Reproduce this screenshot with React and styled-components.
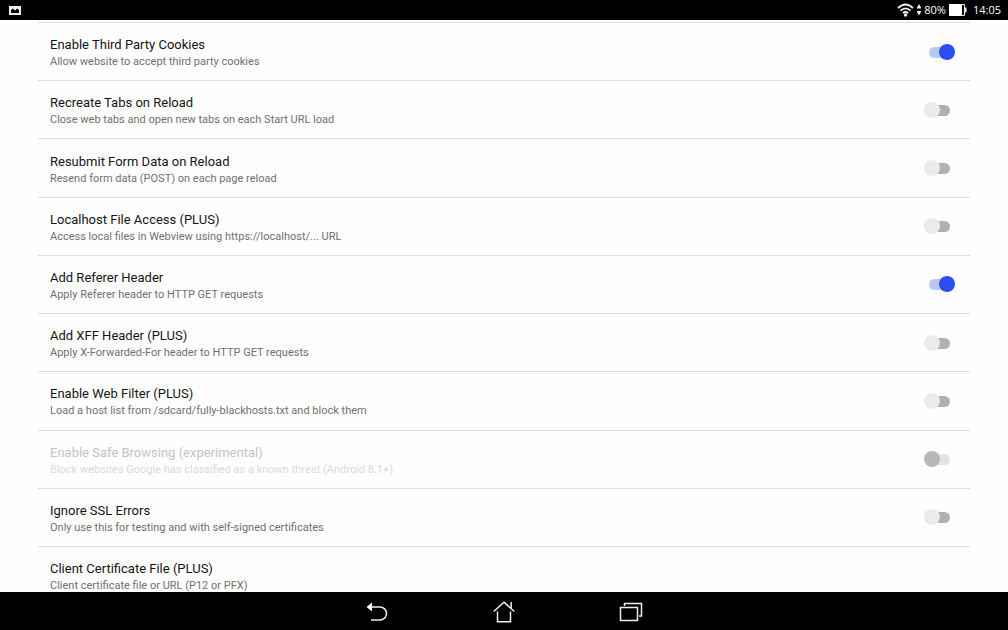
import React, { useState } from 'react';
import styled, { createGlobalStyle } from 'styled-components';

const GlobalStyle = createGlobalStyle`
  * {
    box-sizing: border-box;
  }

  body {
    margin: 0;
    background: #fefefe;
    font-family: Roboto, "Noto Sans", sans-serif;
  }
`;

const Screen = styled.div`
  display: flex;
  flex-direction: column;
  height: 100vh;
`;

const StatusBar = styled.header`
  display: flex;
  flex: none;
  align-items: center;
  justify-content: space-between;
  height: 20px;
  padding: 0 7px 0 8px;
  background: #000;
  color: #fff;
  font-family: "Open Sans", sans-serif;
  font-size: 11px;
  line-height: 20px;
`;

const StatusGroup = styled.div`
  display: flex;
  align-items: center;
  gap: 3px;
`;

const Clock = styled.time`
  margin-left: 3px;
`;

const List = styled.main`
  display: flex;
  flex: 1;
  flex-direction: column;
  min-height: 0;
  margin: 0 38px;
  padding-top: 2px;
  overflow: hidden;
`;

const Row = styled.label`
  display: flex;
  flex: 1 0 auto;
  align-items: center;
  justify-content: space-between;
  padding: 0 15px 0 12px;
  border-top: 1px solid #dcdcdc;
  color: ${props => props.$disabled ? '#c4c4c4' : '#141414'};
`;

const RowText = styled.span`
  padding-top: 3px;
`;

const LinkRow = styled.button`
  flex: none;
  height: 46px;
  padding: 13px 12px 0;
  border: 0;
  border-top: 1px solid #dcdcdc;
  background: none;
  color: #141414;
  font-family: inherit;
  text-align: left;
`;

const Title = styled.span`
  display: block;
  font-size: 13px;
  line-height: 17px;
`;

const Summary = styled.span`
  display: block;
  color: ${props => props.$disabled ? '#dadada' : '#707070'};
  font-size: 11px;
  line-height: 17px;
`;

const Switch = styled.input.attrs({ type: 'checkbox', role: 'switch' })`
  position: relative;
  appearance: none;
  width: 31px;
  height: 16px;
  margin: 0;

  &::before {
    content: '';
    position: absolute;
    top: 3px;
    left: 5px;
    width: 21px;
    height: 11px;
    border-radius: 6px;
    background: #b0b0b0;
  }

  &::after {
    content: '';
    position: absolute;
    top: 0;
    left: 0;
    width: 16px;
    height: 16px;
    border-radius: 50%;
    background: #ebebeb;
  }

  &:checked::before {
    background: #b9c6f8;
  }

  &:checked::after {
    left: 15px;
    background: #2b4df0;
  }

  &:disabled::before {
    background: #e4e4e4;
  }

  &:disabled::after {
    background: #b8b8b8;
  }
`;

const NavBar = styled.nav`
  display: flex;
  flex: none;
  align-items: center;
  justify-content: center;
  gap: 87px;
  height: 38px;
  background: #000;
`;

const NavButton = styled.button`
  display: flex;
  align-items: center;
  justify-content: center;
  width: 40px;
  height: 38px;
  padding: 1px 0 0;
  border: 0;
  background: none;
`;

const settings = [
  { id: 'cookies', title: 'Enable Third Party Cookies', summary: 'Allow website to accept third party cookies', on: true },
  { id: 'tabs', title: 'Recreate Tabs on Reload', summary: 'Close web tabs and open new tabs on each Start URL load' },
  { id: 'form', title: 'Resubmit Form Data on Reload', summary: 'Resend form data (POST) on each page reload' },
  { id: 'localhost', title: 'Localhost File Access (PLUS)', summary: 'Access local files in Webview using https://localhost/... URL' },
  { id: 'referer', title: 'Add Referer Header', summary: 'Apply Referer header to HTTP GET requests', on: true },
  { id: 'xff', title: 'Add XFF Header (PLUS)', summary: 'Apply X-Forwarded-For header to HTTP GET requests' },
  { id: 'filter', title: 'Enable Web Filter (PLUS)', summary: 'Load a host list from /sdcard/fully-blackhosts.txt and block them' },
  { id: 'safe', title: 'Enable Safe Browsing (experimental)', summary: 'Block websites Google has classified as a known threat (Android 8.1+)', disabled: true },
  { id: 'ssl', title: 'Ignore SSL Errors', summary: 'Only use this for testing and with self-signed certificates' },
];

const PictureIcon = () =>
<svg width="14" height="10" viewBox="0 0 14 10">
  <rect x="1" y="1" width="12" height="9" fill="#eee" />
  <path d="M3 8V5.500L4.500 3.500L6 4.500L7.500 5.500L9 3.500L11 5V8Z" fill="#000" />
</svg>;

const WifiIcon = () =>
<svg width="17" height="14" viewBox="0 0 17 14" fill="none" stroke="#eee" strokeWidth="1.8">
  <path d="M1 5Q8.500 -2 16 5" />
  <path d="M3.500 7.700Q8.500 3 13.500 7.700" />
  <path d="M5.800 10.200Q8.500 7.800 11.200 10.200" />
  <circle cx="8.5" cy="12" r="1.7" fill="#eee" stroke="none" />
</svg>;

const TrafficIcon = () =>
<svg width="4" height="12" viewBox="0 0 4 12" fill="#eee">
  <path d="M2 0L4.500 4.500H-0.500ZM2 11.500L4.500 7H-0.500Z" />
</svg>;

const BatteryIcon = () =>
<svg width="18" height="12" viewBox="0 0 18 12">
  <path d="M0 0H13V12H0Z" fill="#fff" />
  <path d="M13 0.500H15.500V11.500H13" fill="none" stroke="#eee" />
  <path d="M15.500 3.500H17.500V8.500H15.500Z" fill="#eee" />
</svg>;

const BackIcon = () =>
<svg width="22" height="20" viewBox="0 0 22 20">
  <path d="M4 5H14A6.500 6.500 0 0 1 14 18H5" fill="none" stroke="#eee" strokeWidth="1.5" />
  <path d="M0.500 5L6 0.500V9.500Z" fill="#fff" />
</svg>;

const HomeIcon = () =>
<svg width="22" height="22" viewBox="0 0 22 22" fill="none" stroke="#eee" strokeWidth="1.500">
  <path d="M0.700 10.500L11 1.200L21.300 10.500" />
  <path d="M4.500 10.500V20.700H17.500V10.500" />
  <path d="M18.200 1V7.500" />
</svg>;

const RecentIcon = () =>
<svg width="24" height="20" viewBox="0 0 24 20" fill="none" stroke="#eee" strokeWidth="1.500">
  <path d="M1.500 5.500H18.500V18.500H1.500Z" />
  <path d="M5.500 4V1.500H22.500V14H20" />
</svg>;

const Setting = ({ item, checked, onChange }) =>
<Row htmlFor={item.id} $disabled={item.disabled}>
  <RowText>
    <Title>{item.title}</Title>
    <Summary $disabled={item.disabled}>{item.summary}</Summary>
  </RowText>
  <Switch id={item.id} checked={checked} disabled={item.disabled} onChange={onChange} />
</Row>;

export default () => {
  const [values, setValues] = useState(
    Object.fromEntries(settings.map(item => [item.id, Boolean(item.on)]))
  );
  const toggle = id => setValues({ ...values, [id]: !values[id] });

  return (
    <Screen>
      <GlobalStyle />
      <StatusBar>
        <PictureIcon />
        <StatusGroup>
          <WifiIcon />
          <TrafficIcon />
          <span>80%</span>
          <BatteryIcon />
          <Clock>14:05</Clock>
        </StatusGroup>
      </StatusBar>
      <List>
        {
          settings.map(item =>
            <Setting key={item.id} item={item} checked={values[item.id]} onChange={() => toggle(item.id)} />
          )
        }
        <LinkRow type="button">
          <Title>Client Certificate File (PLUS)</Title>
          <Summary>Client certificate file or URL (P12 or PFX)</Summary>
        </LinkRow>
      </List>
      <NavBar>
        <NavButton aria-label="Back"><BackIcon /></NavButton>
        <NavButton aria-label="Home"><HomeIcon /></NavButton>
        <NavButton aria-label="Recent apps"><RecentIcon /></NavButton>
      </NavBar>
    </Screen>
  );
};
